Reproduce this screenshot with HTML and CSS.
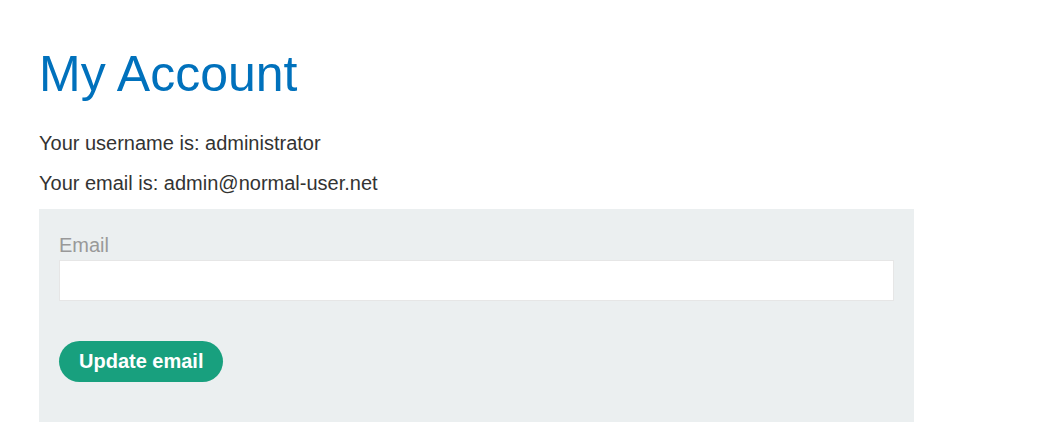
FILE: index.html
```html
<!DOCTYPE html>
<html>
<head>
<meta charset="utf-8">
<link rel="stylesheet" href="styles.css">
</head>
<body>
<div class="container">
  <h1 class="title">My Account</h1>
  <p class="info">Your username is: administrator</p>
  <p class="info">Your email is: admin@normal-user.net</p>
  <form class="panel">
    <label class="label">Email</label>
    <input class="input" type="email" name="email">
    <button class="button" type="button">Update email</button>
  </form>
</div>
</body>
</html>
```
FILE: styles.css
```css
html, body {
  margin: 0;
  padding: 0;
  background: #fff;
}
body {
  font-family: "Liberation Sans", Arial, sans-serif;
  color: #333332;
}
.container {
  padding: 44px 0 0 39px;
  width: 875px;
}
.title {
  margin: 0;
  font-weight: normal;
  font-size: 50px;
  line-height: 60px;
  color: #0071bc;
}
.info {
  margin: 0;
  font-size: 20px;
  line-height: 40px;
}
.info:first-of-type {
  margin-top: 19px;
}
.info:last-of-type {
  margin-bottom: 6px;
}
.panel {
  background: #ebeff0;
  padding: 24px 20px 40px 20px;
  display: flex;
  flex-direction: column;
  align-items: flex-start;
}
.label {
  font-size: 20px;
  line-height: 24px;
  color: #999;
  margin-bottom: 3px;
}
.input {
  box-sizing: border-box;
  width: 100%;
  height: 41px;
  border: 1px solid #e6e6e6;
  background: #fff;
  margin: 0 0 40px 0;
}
.button {
  height: 41px;
  padding: 0 20px;
  border: 0;
  border-radius: 21px;
  background: #18a07e;
  color: #fff;
  font-family: "Liberation Sans", Arial, sans-serif;
  font-weight: bold;
  font-size: 20px;
}
```
